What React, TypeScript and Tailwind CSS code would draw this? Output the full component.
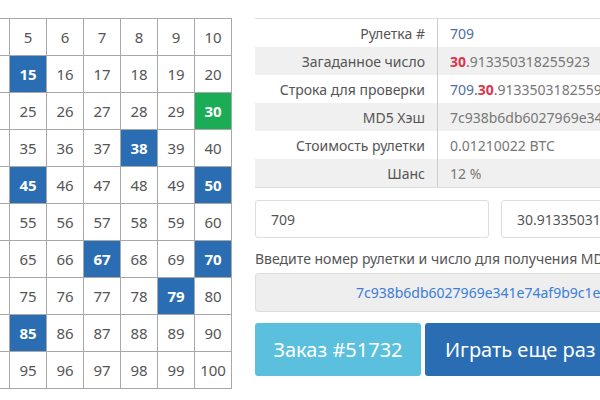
import React from 'react';

const blue = new Set([15, 38, 45, 50, 67, 70, 79, 85]);
const green = new Set([30]);

const rows: number[][] = Array.from({ length: 10 }, (_, r) =>
  Array.from({ length: 10 }, (_, c) => r * 10 + c + 1)
);

function Cell({ n }: { n: number }) {
  let cls = 'text-[#555] font-normal';
  if (blue.has(n)) cls = 'bg-[#2a6db3] text-white font-bold';
  if (green.has(n)) cls = 'bg-[#1aad55] text-white font-bold';
  return (
    <td className={`w-[37px] h-[37px] border border-[#a8a8a8] text-center text-[15px] p-0 ${cls}`}>
      {n}
    </td>
  );
}

const info: { label: string; value: React.ReactNode }[] = [
  { label: 'Рулетка #', value: <span className="text-[#4f6fa0]">709</span> },
  {
    label: 'Загаданное число',
    value: (
      <span>
        <b className="text-[#e0344a]">30</b>.913350318255923
      </span>
    ),
  },
  {
    label: 'Строка для проверки',
    value: (
      <span>
        <span className="text-[#4f6fa0]">709.</span>
        <b className="text-[#e0344a]">30</b>.913350318255923
      </span>
    ),
  },
  { label: 'MD5 Хэш', value: '7c938b6db6027969e341e74af9b9' },
  { label: 'Стоимость рулетки', value: '0.01210022 BTC' },
  { label: 'Шанс', value: '12 %' },
];

export default function App() {
  return (
    <div
      className="w-[600px] h-[400px] overflow-hidden bg-white flex items-start pt-[18px]"
      style={{ fontFamily: '"Noto Sans", "DejaVu Sans", sans-serif' }}
    >
      <table className="border-collapse ml-[-139px] shrink-0">
        <tbody>
          {rows.map((row, i) => (
            <tr key={i}>
              {row.map((n) => (
                <Cell key={n} n={n} />
              ))}
            </tr>
          ))}
        </tbody>
      </table>

      <div className="ml-[23px] w-[480px] shrink-0 flex flex-col">
        <div className="border-t border-b border-[#ddd]">
          {info.map((row, i) => (
            <div
              key={row.label}
              className={`flex h-[28px] items-center text-[14px] ${i % 2 === 1 ? 'bg-[#f0f0f0]' : 'bg-white'}`}
            >
              <div className="w-[183px] h-full flex items-center justify-end pr-[12px] text-[#555] border-r border-[#ccc] shrink-0">
                {row.label}
              </div>
              <div className="pl-[12px] text-[#777] whitespace-nowrap overflow-hidden">{row.value}</div>
            </div>
          ))}
        </div>

        <div className="flex gap-[12px] mt-[12px]">
          <div className="w-[234px] h-[38px] border border-[#ddd] rounded-[3px] flex items-center px-[15px] text-[14px] text-[#555]">
            709
          </div>
          <div className="w-[234px] h-[38px] border border-[#ddd] rounded-[3px] flex items-center px-[15px] text-[14px] text-[#555] whitespace-nowrap overflow-hidden">
            30.913350318255923
          </div>
        </div>

        <div className="mt-[11px] text-[14px] text-[#555] whitespace-nowrap leading-[20px]">
          Введите номер рулетки и число для получения MD5 хэша
        </div>

        <div className="mt-[4px] h-[39px] bg-[#eee] border border-[#ddd] rounded-[3px] flex items-center pl-[100px] text-[14px] text-[#3b7dd8] whitespace-nowrap overflow-hidden">
          7c938b6db6027969e341e74af9b9c1e2
        </div>

        <div className="flex gap-[4px] mt-[11px]">
          <div className="w-[166px] h-[53px] bg-[#5bc0de] rounded-[3px] flex items-center justify-center text-white text-[20px]">
            Заказ #51732
          </div>
          <div className="h-[53px] bg-[#2a6db3] rounded-[3px] flex items-center px-[20px] text-white text-[20px] whitespace-nowrap">
            Играть еще раз
          </div>
        </div>
      </div>
    </div>
  );
}
